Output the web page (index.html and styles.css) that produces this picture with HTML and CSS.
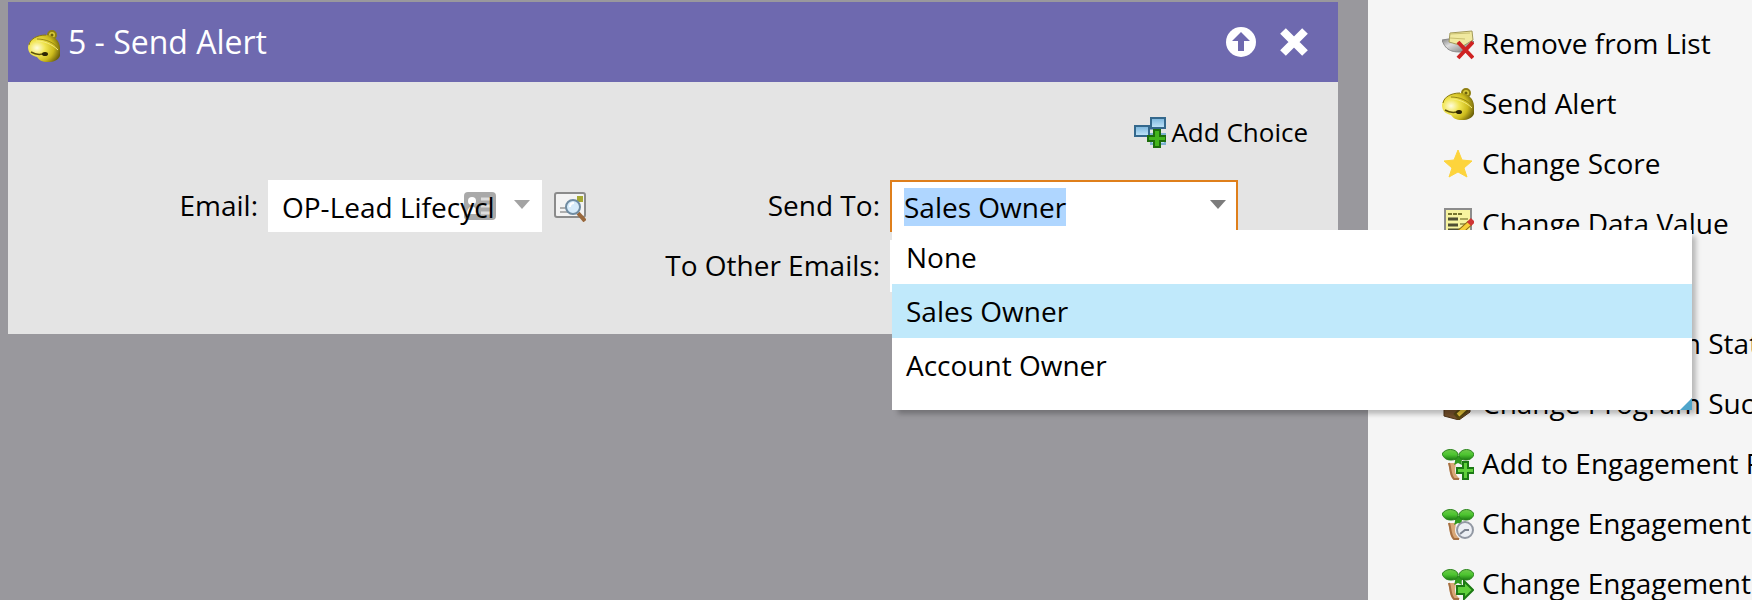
FILE: index.html
```html
<!DOCTYPE html>
<html lang="en">
<head>
    <meta charset="UTF-8">
    <title>Send Alert</title>
    <link rel="stylesheet" href="styles.css">
</head>
<body>
    <!-- shared icon shapes -->
    <svg class="defs" width="0" height="0" aria-hidden="true">
        <defs>
            <radialGradient id="gold" cx="28%" cy="48%" r="75%">
                <stop offset="0" stop-color="#fffde0"/>
                <stop offset=".35" stop-color="#f1e552"/>
                <stop offset=".7" stop-color="#cdbb1c"/>
                <stop offset="1" stop-color="#6d610b"/>
            </radialGradient>
            <linearGradient id="leaf" x1="0" y1="0" x2="0" y2="1">
                <stop offset="0" stop-color="#6fc94c"/>
                <stop offset=".5" stop-color="#4cc42f"/>
                <stop offset="1" stop-color="#1d7a14"/>
            </linearGradient>
            <linearGradient id="blue" x1="0" y1="0" x2="0" y2="1">
                <stop offset="0" stop-color="#79b4dc"/>
                <stop offset="1" stop-color="#c3e6fa"/>
            </linearGradient>
            <linearGradient id="bowl" x1="0" y1="0" x2="1" y2="1">
                <stop offset="0" stop-color="#666"/>
                <stop offset=".4" stop-color="#ddd"/>
                <stop offset="1" stop-color="#666"/>
            </linearGradient>
            <symbol id="bell" viewBox="0 0 32 32">
                <circle cx="24" cy="5" r="4" fill="#d9cb3a" stroke="#8f7f12" stroke-width="2"/>
                <circle cx="24" cy="5" r="1.5" fill="#6d610b"/>
                <path d="M0 17C1 9 9 5 18 5c8 0 14 6 14 13v8c-2 4-6 6-12 6-6 0-9-2-11-5-5-1-9-4-9-10z" fill="url(#gold)"/>
                <path d="M1 15c1-6 8-10 17-10" fill="none" stroke="#8a7a10"/>
                <path d="M9 9c8 0 17 3 22 10" fill="none" stroke="#978716"/>
                <path d="M8 11c8 0 16 3 22 9" fill="none" stroke="#f6ec7c"/>
                <path d="M3 22c5 3 10 3 15 1" fill="none" stroke="#5d5208" stroke-width="1.5"/>
                <ellipse cx="17" cy="24" rx="3" ry="2" fill="#2d2604"/>
            </symbol>
            <symbol id="sprout" viewBox="0 0 32 32">
                <path d="M6 15h8l-1 7c0 4 2 6 5 9h-7c-4-4-3-10-5-16z" fill="#d9a878"/>
                <path d="M7 15c2 6 1 12 5 16h5" fill="none" stroke="#a56f43" stroke-width="2"/>
                <path d="M12 8c2 3 1 6 0 9l4-2 4 2c-1-4 0-6 2-9z" fill="#2f9a1e"/>
                <path d="M0 6c3-6 14-6 16 0 0 5-3 6-7 6-5 0-7-2-9-6z" fill="url(#leaf)" stroke="#2a841c"/>
                <path d="M32 6c-3-6-12-6-15 0 0 5 3 6 7 6 4 0 7-2 8-6z" fill="url(#leaf)" stroke="#2a841c"/>
            </symbol>
        </defs>
    </svg>

    <div class="page">
        <main class="canvas">
            <form class="step">
                <div class="step-header">
                    <svg class="icon" aria-hidden="true"><use href="#bell"/></svg>
                    <h1 class="step-title">5 - Send Alert</h1>
                    <button type="button" class="head-btn" aria-label="Move up">
                        <svg width="30" height="30" viewBox="0 0 30 30">
                            <circle cx="15" cy="15" r="15" fill="#fff"/>
                            <path d="M15 5l9 9h-6v10h-6V14H6z" fill="#6e69af"/>
                        </svg>
                    </button>
                    <button type="button" class="head-btn" aria-label="Delete">
                        <svg width="28" height="28" viewBox="0 0 28 28">
                            <path d="M3 3l22 22M25 3L3 25" stroke="#fff" stroke-width="8"/>
                        </svg>
                    </button>
                </div>
                <div class="step-body">
                    <div class="step-tools">
                        <button type="button" class="add-choice">
                            <svg class="icon" viewBox="0 0 32 32" aria-hidden="true">
                                <path d="M16 12h6M22 10v8" stroke="#34688c" stroke-width="3"/>
                                <rect x="17" y="2" width="14" height="10" fill="url(#blue)" stroke="#34688c" stroke-width="2"/>
                                <rect x="1" y="10" width="14" height="10" fill="url(#blue)" stroke="#34688c" stroke-width="2"/>
                                <rect x="17" y="18" width="14" height="10" fill="url(#blue)" stroke="#7db0cf" stroke-width="2"/>
                                <path d="M20 14h6v6h6v5h-6v6h-6v-6h-6v-5h6z" fill="#43b51c" stroke="#1c6d0b" stroke-width="2"/>
                            </svg>
                            Add Choice
                        </button>
                    </div>
                    <div class="fields">
                        <label class="label" for="email">Email:</label>
                        <div class="email-cell">
                            <div class="combo">
                                <svg class="card-icon" viewBox="0 0 32 28" aria-hidden="true">
                                    <rect width="32" height="28" rx="4" fill="#a9a9a9"/>
                                    <circle cx="8" cy="9" r="4" fill="#fff"/>
                                    <path d="M3 22c0-10 10-10 10 0z" fill="#fff"/>
                                    <path d="M17 7h10M17 14h10M17 21h10" stroke="#ddd" stroke-width="3"/>
                                </svg>
                                <input type="text" id="email" class="combo-input" value="OP-Lead Lifecycl">
                                <svg class="arrow" width="16" height="9" viewBox="0 0 16 9" aria-hidden="true"><path d="M0 0h16L8 9z" fill="#a3a3a3"/></svg>
                            </div>
                            <button type="button" class="preview-btn" aria-label="Preview email">
                                <svg class="icon" viewBox="0 0 32 32" aria-hidden="true">
                                    <rect x="1" y="3" width="30" height="24" rx="2" fill="#f3f3f3" stroke="#8b8b8b" stroke-width="2"/>
                                    <rect x="23" y="6" width="6" height="6" fill="#a5a833"/>
                                    <path d="M6 18h8M6 22h12" stroke="#999" stroke-width="1.5"/>
                                    <path d="M24 23l7 8" stroke="#99683c" stroke-width="4"/>
                                    <circle cx="19" cy="17" r="7" fill="#d6ebfa" stroke="#6f8ba1" stroke-width="2"/>
                                    <path d="M16 17c0-2 1-4 4-4" fill="none" stroke="#fff" stroke-width="2"/>
                                </svg>
                            </button>
                        </div>
                        <label class="label" for="sendTo">Send To:</label>
                        <div class="combo combo-open">
                            <input type="text" id="sendTo" class="combo-input" role="combobox" aria-expanded="true" aria-controls="ownerMenu" value="Sales Owner">
                            <svg class="arrow" width="16" height="9" viewBox="0 0 16 9" aria-hidden="true"><path d="M0 0h16L8 9z" fill="#7c7c7c"/></svg>
                            <ul class="menu" id="ownerMenu" role="listbox">
                                <li class="menu-item" role="option">None</li>
                                <li class="menu-item active" role="option" aria-selected="true">Sales Owner</li>
                                <li class="menu-item" role="option">Account Owner</li>
                            </ul>
                        </div>
                        <label class="label label-other" for="others">To Other Emails:</label>
                        <div class="combo">
                            <input type="text" id="others" class="combo-input">
                        </div>
                    </div>
                </div>
            </form>
        </main>

        <aside class="palette">
            <ul class="actions">
                <li class="action">
                    <svg class="icon" viewBox="0 0 32 32" aria-hidden="true">
                        <path d="M0 12c4 12 12 12 20 12l12-10-6-6z" fill="url(#bowl)" stroke="#888"/>
                        <path d="M8 5l22-2 1 9-10 6-14-4z" fill="#f0e9a0" stroke="#a39a5a"/>
                        <path d="M8 6l20-1M8 10l15 1" stroke="#c9bf70"/>
                        <path d="M16 14l15 16M31 14L16 30" stroke="#cf2222" stroke-width="4"/>
                    </svg>
                    Remove from List
                </li>
                <li class="action">
                    <svg class="icon" aria-hidden="true"><use href="#bell"/></svg>
                    Send Alert
                </li>
                <li class="action">
                    <svg class="icon" viewBox="0 0 32 32" aria-hidden="true">
                        <path d="M16 2l4 10 10 1-8 7 3 9-9-5-9 5 3-9-8-7 10-1z" fill="#fdd43c" stroke="#fdd43c" stroke-linejoin="round"/>
                    </svg>
                    Change Score
                </li>
                <li class="action">
                    <svg class="icon" viewBox="0 0 32 32" aria-hidden="true">
                        <rect x="3" y="1" width="26" height="30" fill="#f7f4a0" stroke="#8c8c8c" stroke-width="2"/>
                        <path d="M6 6h14" stroke="#77752e" stroke-width="2" stroke-dasharray="4 1"/>
                        <path d="M6 11h10M6 17h10M6 22h16" stroke="#4f4f33" stroke-width="3"/>
                        <path d="M18 11h8M18 16h6" stroke="#a9a65a" stroke-width="2"/>
                        <path d="M18 24l10-9" stroke="#8d6b12" stroke-width="6"/>
                        <path d="M18 24l10-9" stroke="#f5cf3a" stroke-width="4"/>
                        <path d="M27 16l4-4" stroke="#cf3535" stroke-width="6"/>
                    </svg>
                    Change Data Value
                </li>
                <li class="action"></li>
                <li class="action action-plain">Change Program Status</li>
                <li class="action">
                    <svg class="icon" viewBox="0 0 32 32" aria-hidden="true">
                        <path d="M2 8h26v16l-11 8-15-4z" fill="#74502b" stroke="#4c3217"/>
                        <path d="M14 29l10-9" stroke="#584711" stroke-width="8"/>
                        <path d="M16 27l10-9" stroke="#e2c13b" stroke-width="4"/>
                    </svg>
                    Change Program Success
                </li>
                <li class="action">
                    <svg class="icon" viewBox="0 0 32 32" aria-hidden="true">
                        <use href="#sprout"/>
                        <path d="M21 14h5v6h6v5h-6v6h-5v-6h-6v-5h6z" fill="#5fd03b" stroke="#1c7a14" stroke-width="2"/>
                    </svg>
                    Add to Engagement Program
                </li>
                <li class="action">
                    <svg class="icon" viewBox="0 0 32 32" aria-hidden="true">
                        <use href="#sprout"/>
                        <circle cx="23" cy="22" r="8" fill="#eceff4" stroke="#9298a3" stroke-width="2"/>
                        <path d="M18 26l5-4h4" fill="none" stroke="#7d8490" stroke-width="2"/>
                    </svg>
                    Change Engagement
                </li>
                <li class="action">
                    <svg class="icon" viewBox="0 0 32 32" aria-hidden="true">
                        <use href="#sprout"/>
                        <path d="M15 18h7v-5l9 9-9 9v-5h-7z" fill="#5fd03b" stroke="#1c7a14" stroke-width="2"/>
                    </svg>
                    Change Engagement
                </li>
            </ul>
        </aside>
    </div>

    <script>
        // the open combo has its value selected
        var sendTo = document.getElementById("sendTo");
        sendTo.focus();
        sendTo.select();
    </script>
</body>
</html>
```

FILE: styles.css
```css
*{
    box-sizing: border-box;
    margin: 0;
    padding: 0;
}
body{
    font-family: "Open Sans", "Noto Sans", sans-serif;
    font-size: 28px;
    color: #000;
    overflow: hidden;
}
ul{
    list-style: none;
}
button{
    border: none;
    background: none;
    font: inherit;
    color: inherit;
    cursor: pointer;
}
svg{
    display: block;
    flex: none;
}
.defs{
    position: absolute;
}
.icon{
    width: 32px;
    height: 32px;
}
.page{
    display: flex;
    height: 100vh;
}

/* canvas and flow step */
.canvas{
    flex: 1;
    min-width: 0;
    padding: 2px 30px 0 8px;
    background-color: #99989d;
}
.step{
    background-color: #e4e4e4;
}
.step-header{
    display: flex;
    align-items: center;
    height: 80px;
    padding: 0 30px 0 20px;
    background-color: #6e69af;
    color: #fff;
}
.step-header .icon{
    margin-top: 8px;
}
.step-title{
    flex: 1;
    padding: 0 0 2px 8px;
    font-size: 32px;
    font-weight: 400;
}
.head-btn{
    margin-left: 24px;
}
.step-body{
    padding: 30px 30px 42px 0;
}
.step-tools{
    display: flex;
    justify-content: flex-end;
    height: 68px;
}
.add-choice{
    display: flex;
    align-items: center;
    gap: 5px;
    height: 40px;
    font-size: 26px;
}
.fields{
    display: grid;
    grid-template-columns: 250px 318px 284px 348px;
    gap: 8px 10px;
}
.label{
    line-height: 50px;
    text-align: right;
    white-space: nowrap;
}
.label-other{
    grid-column: 3;
}
.email-cell{
    display: flex;
    align-items: center;
    justify-content: space-between;
}

/* combo boxes */
.combo{
    position: relative;
    display: flex;
    align-items: center;
    width: 100%;
    height: 52px;
    padding: 2px 12px 0 14px;
    background-color: #fff;
}
.email-cell .combo{
    width: 274px;
}
.combo-input{
    position: relative;
    flex: 1;
    min-width: 0;
    border: none;
    outline: none;
    background: transparent;
    font: inherit;
    color: inherit;
}
.combo-input::selection{
    background-color: #afd6ff;
    color: #000;
}
.arrow{
    margin-bottom: 6px;
}
.card-icon{
    position: absolute;
    top: 12px;
    right: 46px;
    width: 32px;
    height: 28px;
}
.combo-open{
    padding: 2px 10px 0 12px;
    border: 2px solid #df7f1b;
}

/* drop-down list */
.menu{
    position: absolute;
    z-index: 2;
    top: 48px;
    left: 0;
    width: 800px;
    padding-bottom: 18px;
    background-color: #fff;
    box-shadow: 5px 5px 5px -1px rgba(0, 0, 0, .25);
}
.menu::after{
    content: "";
    position: absolute;
    right: 0;
    bottom: 0;
    border-left: 12px solid transparent;
    border-bottom: 12px solid #4fa5cb;
}
.menu-item{
    height: 54px;
    padding-left: 14px;
    line-height: 54px;
}
.menu-item.active{
    background-color: #c0e9fb;
}

/* list of flow actions */
.palette{
    width: 384px;
    overflow: hidden;
    background-color: #f5f5f5;
}
.actions{
    padding: 13px 0 0 74px;
}
.action{
    display: flex;
    align-items: center;
    gap: 8px;
    height: 60px;
    white-space: nowrap;
}
.action .icon{
    margin-top: 2px;
}
.action-plain{
    padding-left: 40px;
}
```
